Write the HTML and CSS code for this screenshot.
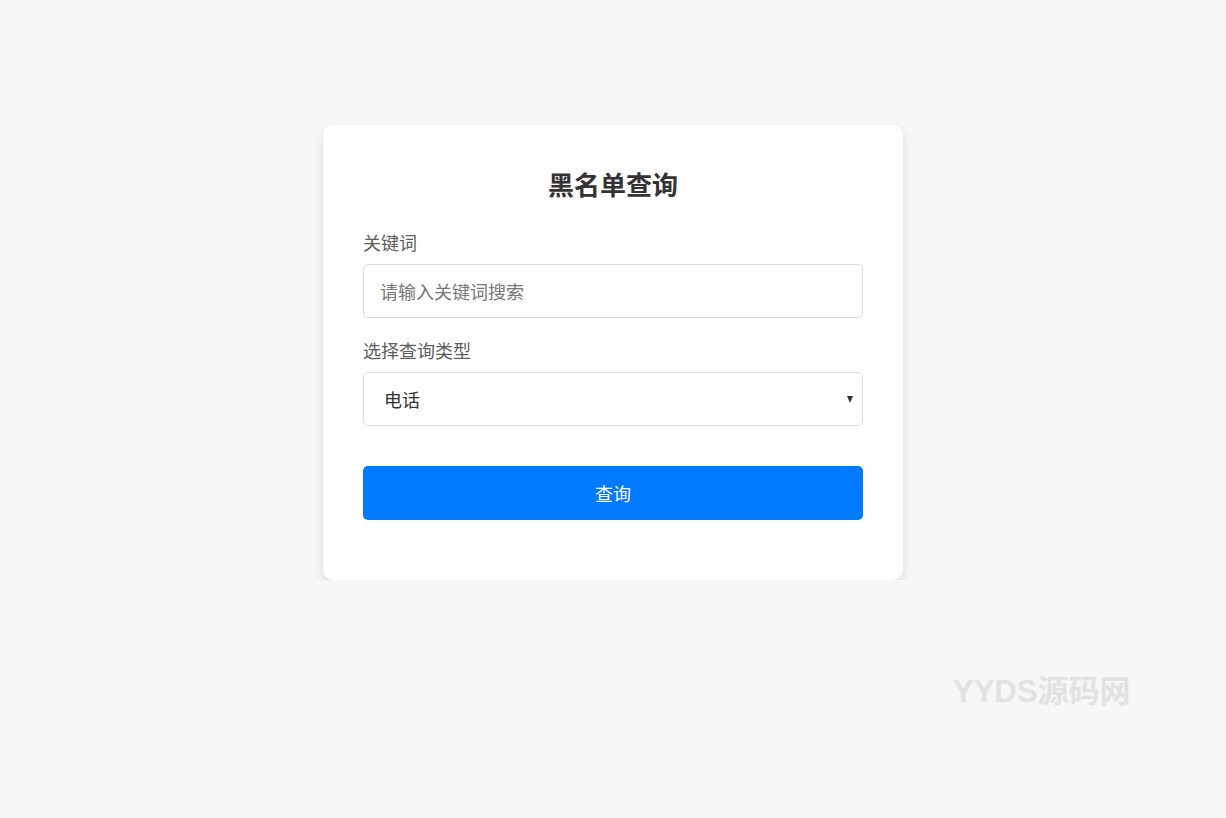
FILE: index.html
```html
<!DOCTYPE html>
<html lang="zh-CN">
<head>
<meta charset="utf-8">
<title>黑名单查询</title>
<link rel="stylesheet" href="styles.css">
</head>
<body>
<div class="page">
  <div class="card">
    <h2 class="title">黑名单查询</h2>
    <form class="form">
      <div class="group">
        <label class="label" for="kw">关键词</label>
        <input class="field" id="kw" type="text" placeholder="请输入关键词搜索">
      </div>
      <div class="group">
        <label class="label" for="type">选择查询类型</label>
        <div class="select-wrap">
          <select class="field select" id="type">
            <option>电话</option>
            <option>姓名</option>
            <option>身份证</option>
          </select>
        </div>
      </div>
      <div class="group group-btn">
        <button class="btn" type="button">查询</button>
      </div>
    </form>
  </div>
</div>
<div class="watermark">YYDS源码网</div>
</body>
</html>
```
FILE: styles.css
```css
html, body {
  margin: 0;
  padding: 0;
  background: #f7f7f7;
  font-family: "Noto Sans CJK SC", "Noto Sans", sans-serif;
}
.page {
  display: flex;
  justify-content: center;
  padding-top: 125px;
}
.card {
  width: 500px;
  padding: 40px;
  background: #fff;
  border-radius: 10px;
  box-shadow: 0 4px 10px rgba(0, 0, 0, 0.12);
}
.title {
  margin: 0 0 27px;
  text-align: center;
  font-size: 26px;
  line-height: 38px;
  font-weight: 700;
  color: #333;
}
.form {
  margin: 0;
}
.group {
  margin-bottom: 20px;
}
.group-btn {
  margin-top: 40px;
}
.label {
  display: block;
  margin-bottom: 10px;
  font-size: 18px;
  line-height: 24px;
  color: #5c5c5c;
}
.field {
  display: block;
  box-sizing: border-box;
  width: 100%;
  height: 54px;
  padding: 0 16px;
  border: 1px solid #ddd;
  border-radius: 5px;
  background: #fff;
  font-family: inherit;
  font-size: 18px;
  color: #333;
  outline: none;
}
.field::placeholder {
  color: #777;
}
.select-wrap {
  position: relative;
}
.select {
  appearance: none;
  -webkit-appearance: none;
  padding-left: 20px;
}
.select-wrap::after {
  content: "";
  position: absolute;
  right: 10px;
  top: 24px;
  border-left: 3.5px solid transparent;
  border-right: 3.5px solid transparent;
  border-top: 7px solid #333;
  pointer-events: none;
}
.btn {
  display: block;
  width: 100%;
  height: 54px;
  border: none;
  border-radius: 5px;
  background: #007bff;
  color: #fff;
  font-family: inherit;
  font-size: 18px;
  cursor: pointer;
}
.watermark {
  position: absolute;
  left: 953px;
  top: 672px;
  font-family: "Liberation Sans", "Noto Sans CJK SC", sans-serif;
  font-weight: 700;
  font-size: 31px;
  line-height: 40px;
  color: #e2e2e2;
  white-space: nowrap;
}
```
